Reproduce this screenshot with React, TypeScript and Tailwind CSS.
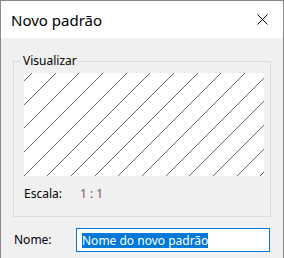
export default function App() {
    const lines = Array.from({ length: 16 }, (_, k) => 8 + k * 23.67)

    return (
        <main
            className="w-[284px] h-[258px] flex flex-col border-l border-t border-r border-[#8a8a8a] bg-[#f0f0f0] text-black overflow-hidden"
            style={{ fontFamily: '"Noto Sans", "Liberation Sans", sans-serif' }}
        >
            <header className="h-[37px] shrink-0 bg-white flex items-center justify-between pl-[10px] pr-[15px]">
                <h1 className="text-[15px] leading-[20px] font-normal">Novo padrão</h1>
                <svg width="11" height="11" viewBox="0 0 11 11" aria-label="Fechar">
                    <path d="M0.5 0.5 L10.5 10.5 M10.5 0.5 L0.5 10.5" stroke="#000" strokeWidth="1" />
                </svg>
            </header>

            <section className="px-[12px]">
                <div className="relative mt-[23px] h-[156px] border border-[#dcdcdc] pt-[11px] pl-[10px]">
                    <span className="absolute left-[7px] top-[-9px] px-[2px] bg-[#f0f0f0] text-[12px] leading-[16px]">
                        Visualizar
                    </span>
                    <div className="w-[240px] h-[103px] bg-white">
                        <svg width="240" height="103" viewBox="0 0 240 103" shapeRendering="crispEdges">
                            {lines.map((d) => (
                                <line key={d} x1={d} y1={0} x2={d - 103} y2={103} stroke="#000" strokeWidth="0.6" />
                            ))}
                        </svg>
                    </div>
                    <div className="flex items-center mt-[10px] text-[12px] leading-[16px]">
                        <span className="w-[56px]">Escala:</span>
                        <span className="text-[#7a5656]">1 : 1</span>
                    </div>
                </div>

                <div className="flex items-center mt-[11px]">
                    <label className="w-[63px] text-[12px] leading-[16px] pl-[1px]">Nome:</label>
                    <div className="w-[194px] h-[24px] border border-[#0078d7] bg-white flex items-center pl-[5px]">
                        <span className="bg-[#0078d7] text-white text-[12px] leading-[15px]">Nome do novo padrão</span>
                    </div>
                </div>
            </section>
        </main>
    )
}
